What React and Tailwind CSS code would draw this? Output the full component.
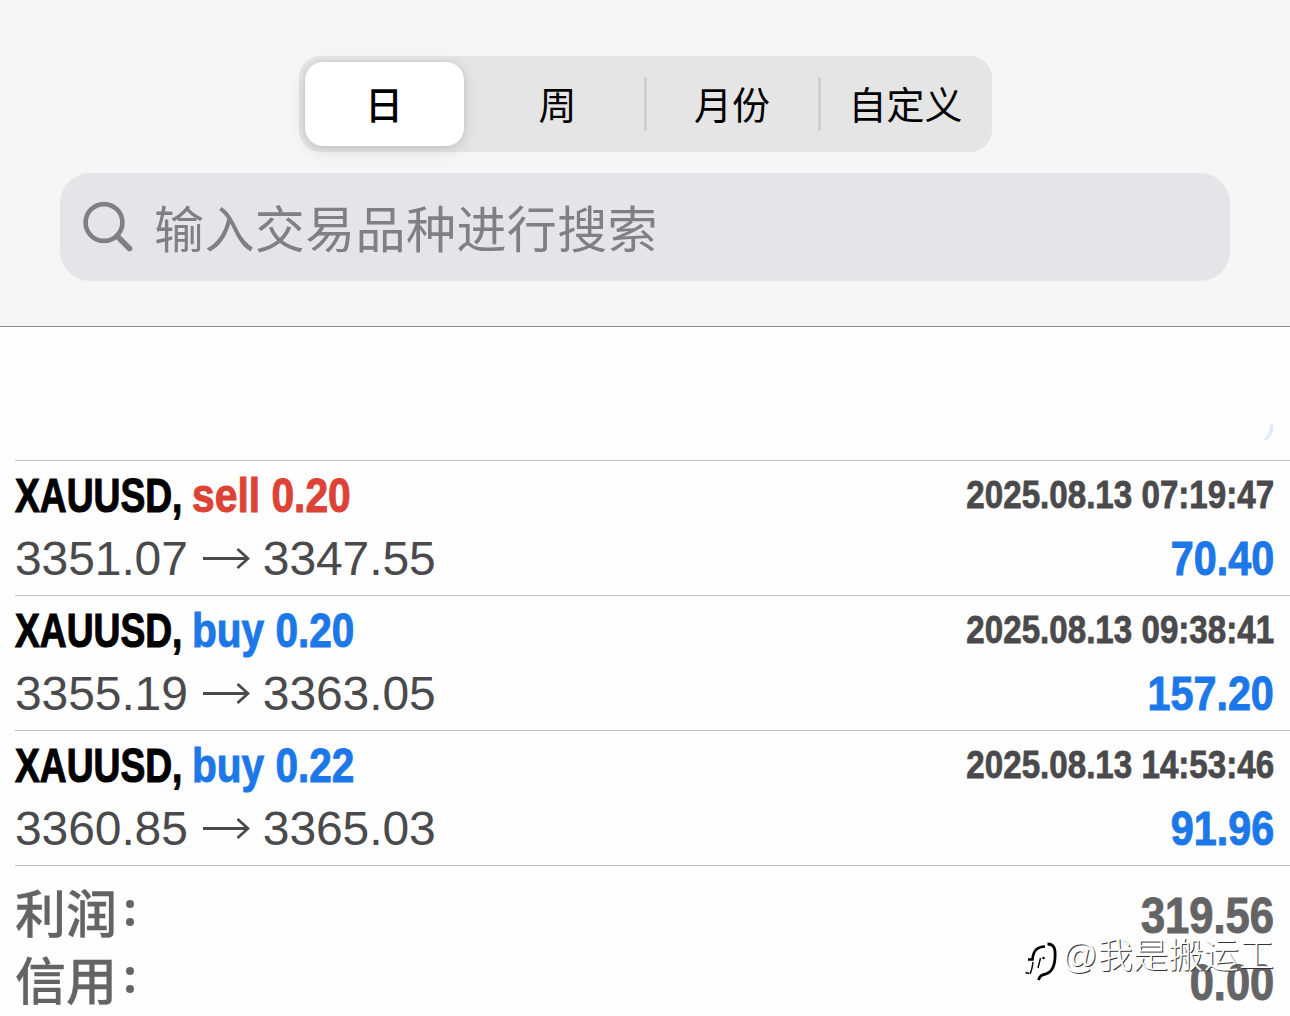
import clsx from 'clsx';

const tabs = [
  { label: '日', width: 'w-[159px]' },
  { label: '周', width: 'w-[180px]' },
  { label: '月份', width: 'w-[174px]' },
  { label: '自定义', width: 'w-[173px]' },
];

const deals = [
  { side: 'sell', volume: '0.20', open: '3351.07', close: '3347.55', time: '2025.08.13 07:19:47', profit: '70.40' },
  { side: 'buy', volume: '0.20', open: '3355.19', close: '3363.05', time: '2025.08.13 09:38:41', profit: '157.20' },
  { side: 'buy', volume: '0.22', open: '3360.85', close: '3365.03', time: '2025.08.13 14:53:46', profit: '91.96' },
];

const totals = [
  { label: '利润', value: '319.56' },
  { label: '信用', value: '0.00' },
];

const Arrow = () => (
  <svg className="ml-[14px] mr-[13px] shrink-0" width="48" height="26" viewBox="0 0 48 26" fill="none" stroke="#4a4a4c" strokeWidth="2.8">
    <path d="M1 12.5H46M35.5 3L46 12.5L35.5 22" />
  </svg>
);

const Tabs = () => (
  <div className="w-[693px] h-24 p-[6px] flex items-center rounded-[22px] bg-[#e5e5e6]">
    {tabs.map((tab, i) => (
      <div
        key={tab.label}
        className={clsx(
          'shrink-0 flex items-center justify-center text-[38px] leading-none text-black',
          tab.width,
          i === 0 && 'h-[84px] rounded-[18px] bg-white font-medium shadow-[0_4px_16px_rgba(0,0,0,0.13),0_0_4px_rgba(0,0,0,0.08)]',
          i === 1 && 'pl-[8px]',
          i > 0 && 'h-[54px]',
          i > 1 && 'border-l-[3px] border-[#d0d0d3]'
        )}
      >
        <span className="pt-[3px]">{tab.label}</span>
      </div>
    ))}
  </div>
);

const SearchBar = () => (
  <div className="mt-[21px] w-[1170px] h-[108px] flex items-center rounded-[30px] bg-[#e5e5e7] text-[#808084]">
    <svg className="ml-[22px] shrink-0" width="52" height="52" viewBox="0 0 52 52" fill="none" stroke="currentColor">
      <circle cx="22" cy="21.5" r="18.4" strokeWidth="4.6" />
      <path d="M35 35L47.5 47.5" strokeWidth="5.6" strokeLinecap="round" />
    </svg>
    <span className="ml-5 pt-[7px] text-[50px] leading-none tracking-[0.4px] whitespace-nowrap">输入交易品种进行搜索</span>
  </div>
);

const Deal = ({ deal }) => (
  <div className="ml-[15px] pr-4 h-[135px] flex justify-between border-t border-[#bfbfc2] leading-none">
    <div>
      <div className="h-[65px] pt-[11px] flex text-[48px] font-bold whitespace-nowrap">
        <span className="w-[177px]">
          <span className="inline-block origin-left scale-x-[0.775] text-black [-webkit-text-stroke:1.1px]">XAUUSD,</span>
        </span>
        <span
          className={clsx(
            'inline-block origin-left [-webkit-text-stroke:1px]',
            deal.side === 'sell' ? 'scale-x-[0.85] text-[#dc4236]' : 'scale-x-[0.845] text-[#1c78e8]'
          )}
        >
          {deal.side} {deal.volume}
        </span>
      </div>
      <div className="h-[65px] flex items-center text-[48px] tracking-[-0.1px] text-[#4a4a4c]">
        <span>{deal.open}</span>
        <Arrow />
        <span>{deal.close}</span>
      </div>
    </div>
    <div className="flex flex-col items-end font-bold whitespace-nowrap">
      <span className="h-[65px] pt-[14px] text-[39px] origin-right scale-x-[0.85] text-[#4a4a4c] [-webkit-text-stroke:0.8px]">{deal.time}</span>
      <span className="h-[65px] pt-[9px] text-[48px] origin-right scale-x-[0.86] text-[#1c78e8] [-webkit-text-stroke:1px]">{deal.profit}</span>
    </div>
  </div>
);

const Watermark = () => (
  <div className="absolute left-[1024px] top-[936px] flex items-start text-white">
    <svg width="36" height="46" viewBox="0 0 36 46" fill="none" stroke="#000">
      <path d="M4 23.5H8.5C9 16 12 10.5 21 10.5" strokeWidth="2.6" />
      <path d="M9 26C8.5 31 7.5 35 6 38M1.5 36.5L5 37.5M16.5 22L14 32" strokeWidth="1.4" />
      <path d="M23.5 8C31 8 31.5 14 31 22C30.5 31 28 37 20 38.5C17 39 16 40 14.5 44" strokeWidth="2.8" />
      <circle cx="19.5" cy="22" r="1.3" fill="#000" stroke="none" />
    </svg>
    <span className="ml-[2px] mt-[2px] text-[35px] leading-none tracking-[0.3px] whitespace-nowrap font-light [text-shadow:1px_1px_0_#333]">@我是搬运工</span>
  </div>
);

const App = () => {
  return (
    <div className="relative w-[1290px] h-[1016px] overflow-hidden bg-[#fefefe] font-['Liberation_Sans','Noto_Sans_CJK_SC',sans-serif]">
      <header className="h-[327px] pt-14 flex flex-col items-center bg-[#f6f6f6] border-b border-[#8d8d8f]">
        <Tabs />
        <SearchBar />
      </header>

      {/* tail of the row scrolled under the header */}
      <div className="h-[133px] pr-4 flex justify-end items-end">
        <svg className="mb-[19px]" width="11" height="18" viewBox="0 0 11 18">
          <path d="M7 1H10C11 8 8 15 3 17H0C5 13 7 8 7 1Z" fill="#dfe9f8" />
        </svg>
      </div>

      {deals.map((deal) => (
        <Deal key={deal.time} deal={deal} />
      ))}

      <div className="ml-[15px] pr-4 pt-[16px] border-t border-[#bfbfc2] font-bold text-[#646466]">
        {totals.map((row) => (
          <div key={row.label} className="h-[67px] flex items-center justify-between leading-none">
            <span className="flex items-center text-[51px] font-medium [-webkit-text-stroke:0.3px]">
              {row.label}
              <span className="ml-[9px] mb-[5px] flex flex-col gap-[10px]">
                <span className="w-2 h-2 rounded-full bg-[#646466]" />
                <span className="w-2 h-2 rounded-full bg-[#646466]" />
              </span>
            </span>
            <span className="pt-px text-[50px] origin-right scale-x-[0.87] [-webkit-text-stroke:1px]">{row.value}</span>
          </div>
        ))}
      </div>

      <Watermark />
    </div>
  );
};

export default App;
